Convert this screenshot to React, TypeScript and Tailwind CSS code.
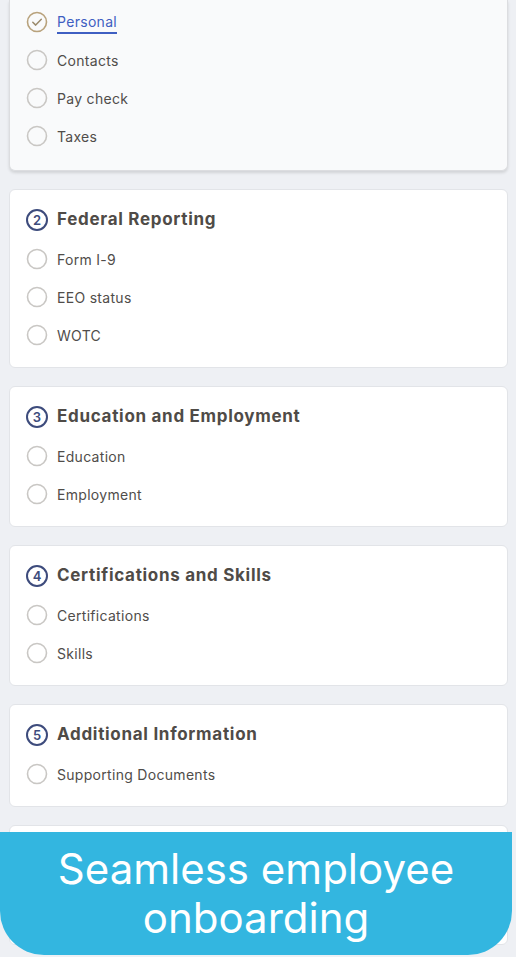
import React from 'react';

type Section = {
  num?: number;
  title?: string;
  items: string[];
};

const sections: Section[] = [
  { num: 2, title: 'Federal Reporting', items: ['Form I-9', 'EEO status', 'WOTC'] },
  { num: 3, title: 'Education and Employment', items: ['Education', 'Employment'] },
  { num: 4, title: 'Certifications and Skills', items: ['Certifications', 'Skills'] },
  { num: 5, title: 'Additional Information', items: ['Supporting Documents'] },
];

function EmptyCircle() {
  return (
    <svg width="22" height="22" viewBox="0 0 22 22" className="shrink-0">
      <circle cx="11" cy="11" r="9.5" fill="none" stroke="#c9c7c4" strokeWidth="1.6" />
    </svg>
  );
}

function CheckCircle() {
  return (
    <svg width="22" height="22" viewBox="0 0 22 22" className="shrink-0">
      <circle cx="11" cy="11" r="9.5" fill="none" stroke="#b8a27c" strokeWidth="1.6" />
      <path d="M6.8 11.3l2.9 2.8 5.6-5.8" fill="none" stroke="#9a8a6c" strokeWidth="1.5" strokeLinecap="round" strokeLinejoin="round" />
    </svg>
  );
}

function NumberCircle({ n }: { n: number }) {
  return (
    <span className="w-[22px] h-[22px] shrink-0 rounded-full border-2 border-[#3d4b7c] flex items-center justify-center text-[13px] font-semibold text-[#3d4b7c] leading-none">
      {n}
    </span>
  );
}

function Item({ label, done, active }: { label: string; done?: boolean; active?: boolean }) {
  return (
    <div className="h-[38px] flex items-center gap-[9px]">
      {done ? <CheckCircle /> : <EmptyCircle />}
      {active ? (
        <span className="text-[14px] tracking-[0.3px] text-[#3f5fc2] border-b-2 border-[#3f5fc2] leading-[18px] pb-[1px] mt-[3px]">{label}</span>
      ) : (
        <span className="text-[14px] tracking-[0.3px] text-[#504d4a]">{label}</span>
      )}
    </div>
  );
}

export default function App() {
  return (
    <div className="relative w-[516px] h-[957px] overflow-hidden bg-white" style={{ fontFamily: 'Inter, "Noto Sans", sans-serif' }}>
      <div className="h-full bg-[#eef0f4] pl-[9px] pr-[8px] flex flex-col gap-[18px]">
        {/* first card, its top scrolled out of view */}
        <div className="bg-[#f9fafb] rounded-b-md border-x border-b border-[#dcdde0] shadow-[0_2px_3px_rgba(0,0,0,0.12)] pt-[3px] pb-[15px] px-[16px]">
          <Item label="Personal" done active />
          <Item label="Contacts" />
          <Item label="Pay check" />
          <Item label="Taxes" />
        </div>

        {sections.map((s) => (
          <div key={s.num} className="bg-white rounded-md border border-[#e2e4e8] pt-[18px] pb-[13px] px-[16px]">
            <div className="h-[24px] flex items-center gap-[9px] mb-[8px]">
              <NumberCircle n={s.num!} />
              <span className="text-[17px] font-bold text-[#4f4b47] tracking-[0.7px]">{s.title}</span>
            </div>
            {s.items.map((it) => (
              <Item key={it} label={it} />
            ))}
          </div>
        ))}

        <div className="bg-white rounded-md border border-[#e2e4e8] h-[120px]" />
      </div>

      {/* banner over the list */}
      <div className="absolute left-0 top-[832px] w-[512px] h-[123px] bg-[#33b6e0] rounded-b-[44px] flex flex-col items-center justify-center pb-[2px]">
        <div className="text-white text-[42px] leading-[49px] text-center">
          Seamless employee
          <br />
          onboarding
        </div>
      </div>
    </div>
  );
}
